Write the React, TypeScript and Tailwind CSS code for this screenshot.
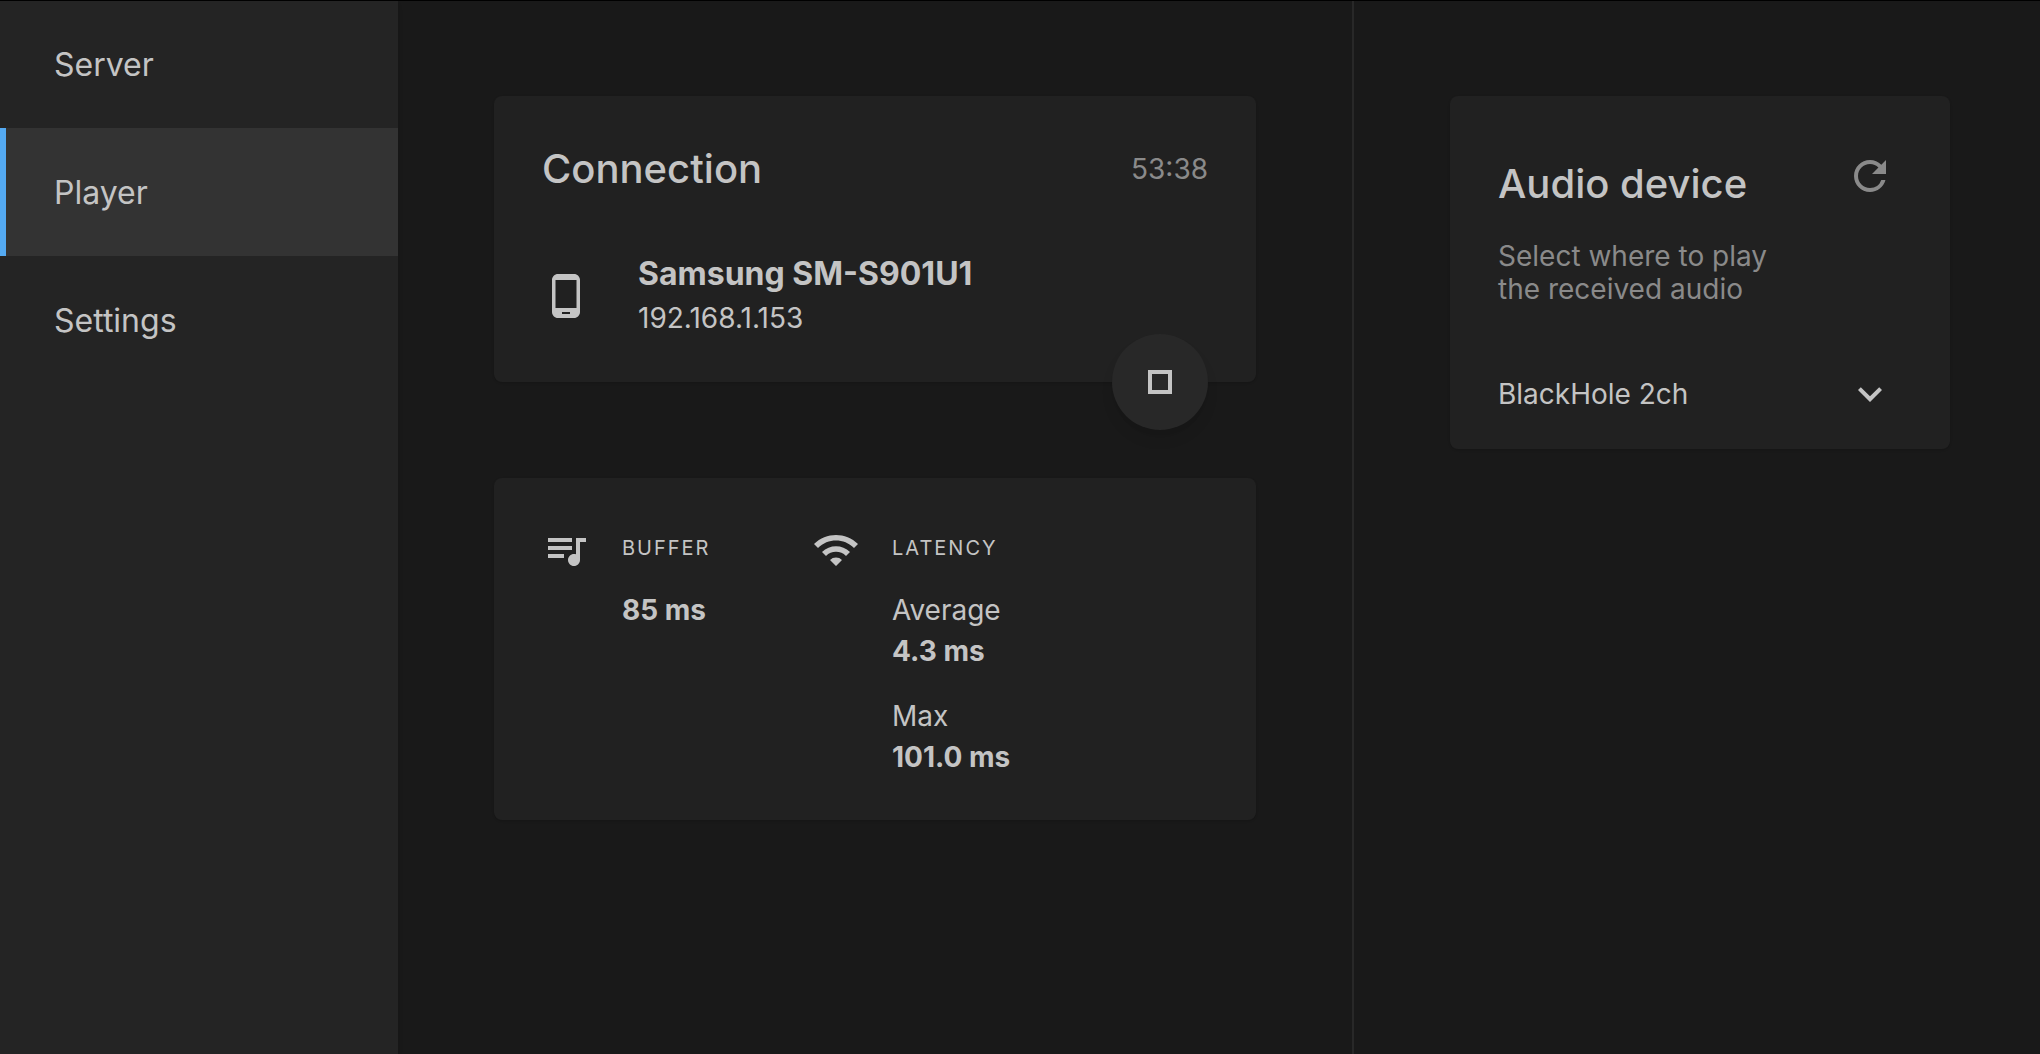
import { useState, type ReactNode } from "react";
import {
  MdExpandMore,
  MdOutlineStop,
  MdPhoneAndroid,
  MdQueueMusic,
  MdRefresh,
  MdWifi,
} from "react-icons/md";

const pages = ["Server", "Player", "Settings"];
const latency = [
  { label: "Average", value: "4.3 ms" },
  { label: "Max", value: "101.0 ms" },
];

function Sidebar() {
  const [active, setActive] = useState("Player");
  return (
    <nav className="z-10 flex w-[398px] shrink-0 flex-col bg-[#242424] shadow-md">
      {pages.map((page) => (
        <button
          key={page}
          type="button"
          onClick={() => setActive(page)}
          aria-current={page === active ? "page" : undefined}
          className={
            page === active
              ? "h-32 border-l-6 border-[#54aaf2] bg-[#333333] pt-0.5 pl-12 text-left text-[32px]"
              : "h-32 border-l-6 border-transparent pt-0.5 pl-12 text-left text-[32px]"
          }
        >
          {page}
        </button>
      ))}
    </nav>
  );
}

function Metric({ icon, title, children }: { icon: ReactNode; title: string; children: ReactNode }) {
  return (
    <section className="flex items-start gap-8">
      {icon}
      <div>
        <h3 className="text-[20px] leading-11 tracking-widest uppercase">{title}</h3>
        <div className="mt-5 flex flex-col gap-6 text-[28px] leading-[41px]">{children}</div>
      </div>
    </section>
  );
}

export default function App() {
  return (
    <div className="relative flex min-h-screen bg-[#191919] font-['Inter',sans-serif] text-[#c4c4c4]">
      <div className="pointer-events-none absolute inset-x-0 top-0 z-20 h-px bg-black" />
      <Sidebar />

      <main className="flex flex-1 flex-col gap-24 px-24 py-24">
        <section className="relative rounded-lg bg-[#212121] px-12 pt-12 pb-[42px] shadow-sm">
          <header className="flex items-center justify-between">
            <h2 className="text-[40px] leading-[50px] font-medium">Connection</h2>
            <time className="text-[28px] text-[#8a8a8a]">53:38</time>
          </header>
          <div className="mt-[58px] flex items-center gap-12">
            <MdPhoneAndroid className="size-12" />
            <div>
              <p className="text-[32px] leading-11 font-bold">Samsung SM-S901U1</p>
              <p className="text-[28px] leading-11">192.168.1.153</p>
            </div>
          </div>
          <button
            type="button"
            aria-label="Stop"
            className="absolute right-12 -bottom-12 flex size-24 items-center justify-center rounded-full bg-[#282828] shadow-lg"
          >
            <MdOutlineStop className="size-12" />
          </button>
        </section>

        <div className="grid grid-cols-[270px_1fr] rounded-lg bg-[#212121] px-12 pt-12 pb-[42px] shadow-sm">
          <Metric icon={<MdQueueMusic className="size-12" />} title="Buffer">
            <p className="font-bold">85 ms</p>
          </Metric>
          <Metric icon={<MdWifi className="size-12" />} title="Latency">
            {latency.map((item) => (
              <div key={item.label}>
                <p>{item.label}</p>
                <p className="font-bold">{item.value}</p>
              </div>
            ))}
          </Metric>
        </div>
      </main>

      <aside className="w-[688px] shrink-0 border-l-2 border-[#282828] py-24 pr-[90px] pl-24">
        <section className="rounded-lg bg-[#212121] px-12 pt-12 pb-[31px] shadow-sm">
          <header className="flex items-end justify-between">
            <h2 className="text-[40px] leading-12 font-medium">Audio device</h2>
            <button
              type="button"
              aria-label="Refresh devices"
              className="flex size-16 items-center justify-center text-[#8a8a8a]"
            >
              <MdRefresh className="size-12" />
            </button>
          </header>
          <label htmlFor="device" className="mt-8 block max-w-[300px] text-[28px] leading-[33px] text-[#8a8a8a]">
            Select where to play the received audio
          </label>
          <div className="relative mt-16">
            <select id="device" className="block h-12 w-full appearance-none bg-transparent text-[28px]">
              <option>BlackHole 2ch</option>
            </select>
            <MdExpandMore className="pointer-events-none absolute top-0 right-2 size-12" />
          </div>
        </section>
      </aside>
    </div>
  );
}
